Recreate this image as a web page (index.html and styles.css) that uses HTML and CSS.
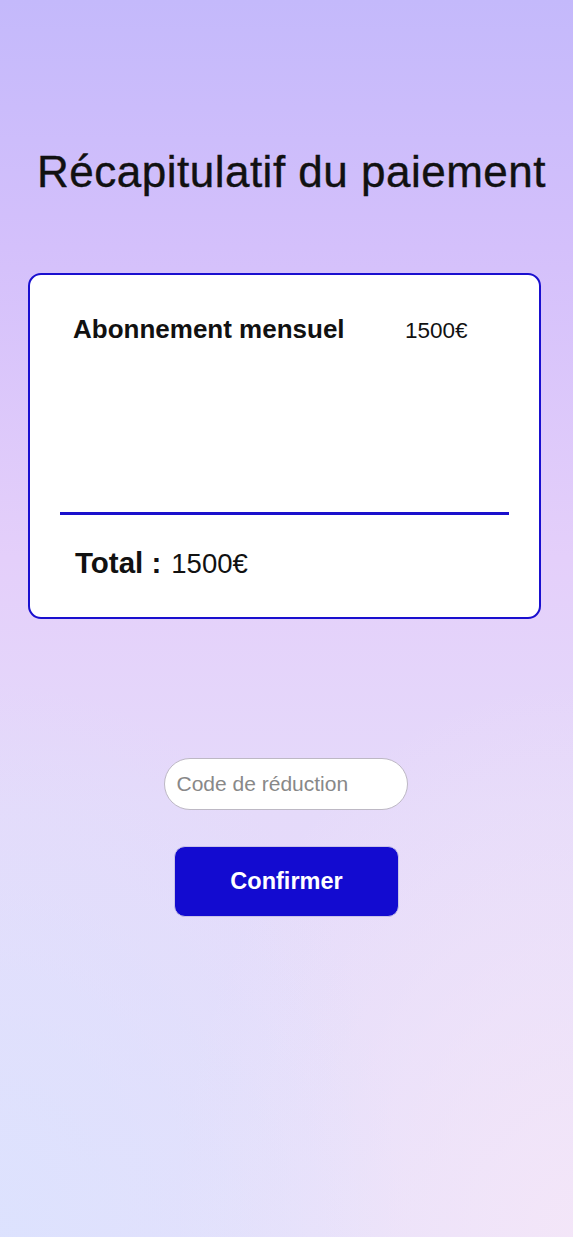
FILE: index.html
```html
<!DOCTYPE html>
<html lang="fr">
<head>
<meta charset="utf-8">
<title>Récapitulatif du paiement</title>
<link rel="stylesheet" href="styles.css">
</head>
<body>
<main class="page">
  <h1 class="title">Récapitulatif du paiement</h1>
  <section class="card">
    <div class="line-item">
      <span class="item-name">Abonnement mensuel</span>
      <span class="item-price">1500€</span>
    </div>
    <hr class="divider">
    <div class="total">
      <span class="total-label">Total :</span>
      <span class="total-value">1500€</span>
    </div>
  </section>
  <form class="actions">
    <input class="promo" type="text" placeholder="Code de réduction">
    <button class="confirm" type="button">Confirmer</button>
  </form>
</main>
</body>
</html>
```

FILE: styles.css
```css
html, body {
  margin: 0;
  padding: 0;
}
body {
  width: 573px;
  min-height: 1237px;
  font-family: "Liberation Sans", Arial, sans-serif;
  color: #111;
  background:
    radial-gradient(ellipse 70% 45% at 0% 100%, rgba(220,226,254,0.95), rgba(220,226,254,0) 100%),
    radial-gradient(ellipse 70% 45% at 100% 100%, rgba(244,230,248,0.95), rgba(244,230,248,0) 100%),
    linear-gradient(180deg, #c4b9fb 0%, #d4c0fb 20%, #e4cffa 45%, #e5dafa 65%, #e6e0fb 100%);
}
.page {
  display: flex;
  flex-direction: column;
  align-items: center;
  padding-top: 144px;
}
.title {
  margin: 0;
  font-size: 44px;
  font-weight: 400;
  line-height: 56px;
  letter-spacing: 0.5px;
  color: #111;
  padding-left: 10px;
  -webkit-text-stroke: 0.4px #111;
}
.card {
  box-sizing: border-box;
  width: 513px;
  height: 346px;
  margin-top: 73px;
  margin-right: 4px;
  background: #fff;
  border: 2.5px solid #1a0fcf;
  border-radius: 13px;
  display: flex;
  flex-direction: column;
  padding: 0 30px 0 30px;
}
.line-item {
  display: flex;
  align-items: baseline;
  padding-top: 39px;
  padding-left: 13px;
}
.item-name {
  font-size: 26px;
  font-weight: 700;
  width: 332px;
}
.item-price {
  font-size: 22.5px;
  font-weight: 400;
}
.divider {
  margin: auto 0 0 0;
  border: 0;
  height: 3px;
  background: #1a10cc;
  margin-bottom: 31px;
}
.total {
  display: flex;
  align-items: baseline;
  gap: 10px;
  padding-left: 15px;
  margin-bottom: 37px;
}
.total-label {
  font-size: 29.5px;
  font-weight: 700;
}
.total-value {
  font-size: 27.5px;
  font-weight: 400;
}
.actions {
  display: flex;
  flex-direction: column;
  align-items: center;
  margin-top: 139px;
  gap: 37px;
}
.promo {
  box-sizing: border-box;
  width: 244px;
  height: 52px;
  margin-right: 2px;
  border: 1px solid #bdb8c4;
  border-radius: 26px;
  background: #fff;
  padding: 0 12px;
  font-family: "Liberation Sans", Arial, sans-serif;
  font-size: 21px;
  color: #333;
  outline: none;
}
.promo::placeholder {
  color: #888;
}
.confirm {
  box-sizing: border-box;
  width: 225px;
  height: 71px;
  margin-top: -1px;
  border: 1px solid #c9c3e8;
  border-radius: 11px;
  background: #130bd0;
  color: #fff;
  font-family: "Liberation Sans", Arial, sans-serif;
  font-size: 23.5px;
  font-weight: 700;
  cursor: pointer;
}
```
